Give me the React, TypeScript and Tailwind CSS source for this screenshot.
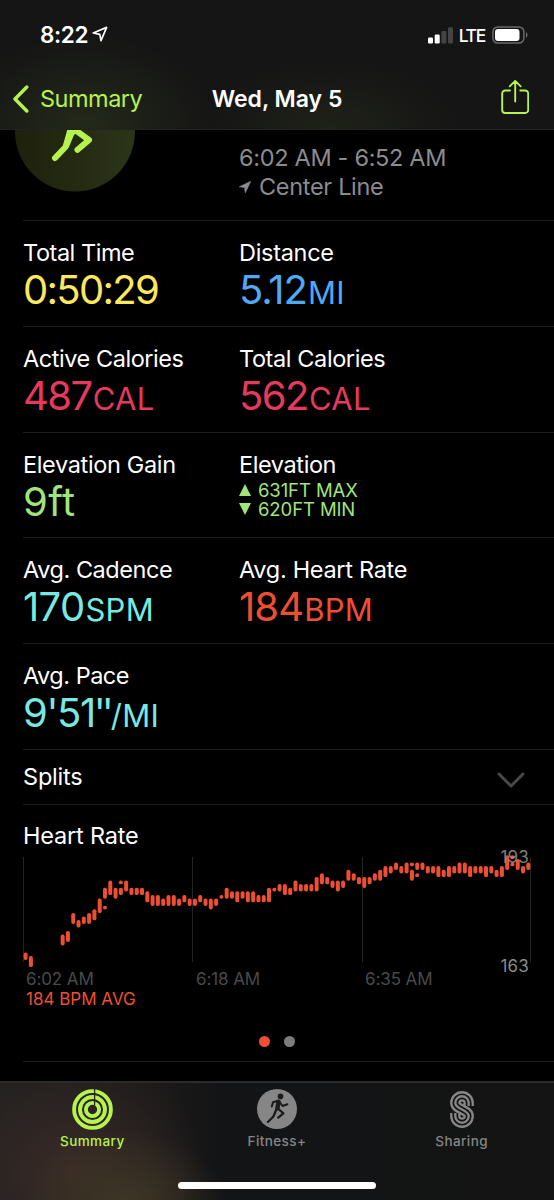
import React from 'react';

type Metric = {
  label: string;
  value?: string;
  marks?: string;
  unit?: string;
  color?: string;
  labelTracking: string;
  valueTracking?: string;
};

const rows: { height: string; cells: Metric[] }[] = [
  {
    height: 'h-[106px]',
    cells: [
      { label: 'Total Time', value: '0:50:29', color: 'text-[#fbe85c]', labelTracking: 'tracking-[-0.45px]', valueTracking: 'tracking-[-1.7px]' },
      { label: 'Distance', value: '5.12', unit: 'MI', color: 'text-[#4fa9f5]', labelTracking: 'tracking-[-0.3px]', valueTracking: 'tracking-[-1px]' }
    ]
  },
  {
    height: 'h-[106px]',
    cells: [
      { label: 'Active Calories', value: '487', unit: 'CAL', color: 'text-[#e5395d]', labelTracking: 'tracking-[-0.45px]', valueTracking: 'tracking-[-1.5px]' },
      { label: 'Total Calories', value: '562', unit: 'CAL', color: 'text-[#e5395d]', labelTracking: 'tracking-[-0.4px]', valueTracking: 'tracking-[-1.5px]' }
    ]
  },
  {
    height: 'h-[105px]',
    cells: [
      { label: 'Elevation Gain', value: '9ft', color: 'text-[#a1e47b]', labelTracking: 'tracking-[-0.35px]', valueTracking: 'tracking-[0.4px]' },
      { label: 'Elevation', labelTracking: 'tracking-[-0.4px]' }
    ]
  },
  {
    height: 'h-[106px]',
    cells: [
      { label: 'Avg. Cadence', value: '170', unit: 'SPM', color: 'text-[#79e8e0]', labelTracking: 'tracking-[-0.45px]', valueTracking: 'tracking-[-0.7px]' },
      { label: 'Avg. Heart Rate', value: '184', unit: 'BPM', color: 'text-[#ee4f33]', labelTracking: 'tracking-[-0.3px]', valueTracking: 'tracking-[-0.9px]' }
    ]
  },
  {
    height: 'h-[106px]',
    cells: [
      { label: 'Avg. Pace', value: "9'51", marks: "''", unit: '/MI', color: 'text-[#79e8e0]', labelTracking: 'tracking-[-0.5px]', valueTracking: 'tracking-[-1.4px]' }
    ]
  }
];

// [slot, highest bpm, lowest bpm]
const samples: [number, number, number][] = [
  [0, 166, 165], [1, 165, 163], [7, 171, 169], [8, 172, 170], [9, 177, 175],
  [10, 175, 174], [11, 176, 175], [12, 177, 175], [13, 178, 176], [14, 181, 178],
  [15, 184, 182], [15, 179, 179], [16, 186, 183], [17, 184, 182], [18, 184, 183],
  [18, 186, 186], [19, 186, 184], [20, 184, 183], [21, 184, 183], [22, 184, 183],
  [23, 183, 181], [24, 182, 180], [25, 182, 180], [26, 181, 180], [27, 182, 180],
  [28, 182, 180], [29, 181, 180], [30, 182, 181], [31, 181, 180], [32, 181, 180],
  [33, 182, 181], [34, 181, 180], [35, 181, 179], [36, 181, 180], [37, 182, 182],
  [38, 184, 182], [39, 183, 182], [40, 183, 181], [41, 183, 182], [42, 183, 181],
  [43, 183, 181], [44, 182, 181], [45, 182, 181], [46, 184, 181], [47, 184, 184],
  [48, 185, 184], [49, 185, 183], [50, 184, 183], [51, 186, 184], [52, 185, 184],
  [53, 185, 184], [54, 185, 184], [55, 187, 184], [56, 188, 186], [57, 187, 186],
  [58, 186, 185], [59, 186, 184], [60, 186, 185], [61, 189, 187], [62, 188, 187],
  [63, 187, 186], [64, 187, 185], [65, 187, 186], [66, 188, 187], [67, 189, 187],
  [68, 190, 188], [69, 190, 189], [70, 191, 190], [71, 190, 189], [72, 191, 189],
  [73, 189, 187], [73, 191, 191], [74, 191, 190], [74, 188, 188], [75, 191, 190],
  [76, 190, 189], [77, 190, 189], [78, 190, 188], [79, 189, 188], [80, 190, 188],
  [81, 190, 189], [82, 191, 189], [83, 191, 189], [84, 190, 188], [85, 190, 189],
  [86, 190, 189], [87, 190, 188], [88, 190, 189], [89, 189, 188], [90, 190, 188],
  [91, 193, 190], [92, 193, 193], [92, 191, 191], [93, 192, 190], [94, 190, 189],
  [95, 191, 190]
];

const Runner: React.FC = () => (
  <svg className="h-10 w-10" viewBox="0 0 40 40" fill="none">
    <circle cx="20" cy="20" r="20" fill="#868686" />
    <g stroke="#1b1b1b" strokeLinecap="round" strokeLinejoin="round">
      <circle cx="23.5" cy="7.4" r="2.8" fill="#1b1b1b" stroke="none" />
      <path d="M21 11.8 16 13.3 14.8 17.6M23 13.5l2.6 3.5 4.8-1.8" strokeWidth="2" />
      <path d="M21.6 12.8 20.4 19.2" strokeWidth="4.4" />
      <path d="M20.8 19.5 26.4 24.3 21.2 28.6M19.4 20.3 16.4 27.5 10.9 33" strokeWidth="2.3" />
    </g>
  </svg>
);

const Rings: React.FC = () => (
  <svg className="h-[41px] w-[41px]" viewBox="0 0 41 41" fill="none">
    <g stroke="#b6f34f" strokeWidth="3.9">
      <circle cx="20.5" cy="20.5" r="18.4" />
      <circle cx="20.5" cy="20.5" r="12.5" />
      <circle cx="20.5" cy="20.5" r="6.6" />
    </g>
    <path d="M22.6 0V16.5" stroke="#272120" strokeWidth="1.3" />
  </svg>
);

const SharingIcon: React.FC = () => {
  const s = 'M18.7 14.6V11.7A6.7 6.7 0 0 0 5.3 11.7C5.3 18.2 18.7 18.2 18.7 24.7A6.7 6.7 0 0 1 5.3 24.7V21.8';
  return (
    <svg className="h-[37px] w-6" viewBox="0 0 24 36.4" fill="none">
      <path d={s} stroke="#868686" strokeWidth="10.4" />
      <path d={s} stroke="#141414" strokeWidth="5.8" />
      <path d={s} stroke="#868686" strokeWidth="2.4" />
    </svg>
  );
};

const HeartRateChart: React.FC = () => (
  <svg className="block h-[120px] w-[554px]" viewBox="0 850 554 120" fill="none">
    {[23.5, 192.5, 362.5, 530.5].map((x) => (
      <path key={x} d={`M${x} 857V962`} stroke="#242425" />
    ))}
    {samples.map(([slot, high, low], index) => (
      <rect
        key={index}
        x={23.6 + slot * 5.292}
        y={855.3 + (193 - high) * 3.6}
        width="4"
        height={(high - low + 1) * 3.6 + 0.2}
        rx="1.9"
        fill="#ee4f33"
      />
    ))}
  </svg>
);

const App: React.FC = () => {
  return (
    <div className="flex h-[1200px] w-[554px] flex-col overflow-hidden bg-black font-['Inter',sans-serif] whitespace-nowrap text-white">
      {/* Status bar and navigation */}
      <header className="h-[130px] shrink-0 border-b border-[#222] bg-[#151515] bg-[radial-gradient(ellipse_130px_90px_at_85px_125px,#23291a,transparent),radial-gradient(ellipse_130px_70px_at_330px_130px,#1f2218,transparent)]">
        <div className="flex h-[70px] items-center pr-[26px] pl-10">
          <span className="text-[22.5px] leading-none font-semibold tracking-[-0.4px]">8:22</span>
          <svg className="mb-0.5 ml-1 h-4 w-4" viewBox="0 0 16 16" fill="none" stroke="#fff" strokeWidth="1.7" strokeLinejoin="round">
            <path d="M1.2 7 14.6 1.4 9 14.6 7.8 8.3Z" />
          </svg>
          <div className="ml-auto flex items-center">
            <svg className="h-[17px] w-[25px]" viewBox="0 0 25 17">
              <rect x="0" y="10.5" width="5" height="6" rx="1.2" fill="#fff" />
              <rect x="6.7" y="7.5" width="5" height="9" rx="1.2" fill="#fff" />
              <rect x="13.4" y="4" width="5" height="12.5" rx="1.2" fill="#444" />
              <rect x="20" y="0.3" width="5" height="16.2" rx="1.2" fill="#444" />
            </svg>
            <span className="mt-0.5 ml-1.5 text-[17.5px] leading-none font-medium tracking-[-1.3px]">LTE</span>
            <svg className="ml-[7px] h-[18px] w-9" viewBox="0 0 36 18" fill="none">
              <rect x="0.9" y="0.9" width="31" height="16.2" rx="5" stroke="#6a6a6a" strokeWidth="1.5" />
              <rect x="3" y="3" width="24.5" height="12" rx="3" fill="#fff" />
              <path d="M34 6.3c2 .8 2 4.6 0 5.4Z" fill="#6a6a6a" />
            </svg>
          </div>
        </div>
        <div className="grid h-[58px] grid-cols-[200px_1fr_200px] items-center">
          <div className="flex items-center pl-[13px] text-[#b6f34f]">
            <svg className="h-7 w-4" viewBox="0 0 16 28" fill="none" stroke="currentColor" strokeWidth="3.4" strokeLinecap="round" strokeLinejoin="round">
              <path d="M13.8 2 2 14l11.8 12" />
            </svg>
            <span className="ml-[11px] text-[23.5px] leading-none tracking-[-0.5px]">Summary</span>
          </div>
          <span className="text-center text-[23px] leading-none font-semibold">Wed, May 5</span>
          <svg className="mr-[25px] mb-1 h-9 w-7 justify-self-end" viewBox="0 0 28 36" fill="none" stroke="#b6f34f" strokeWidth="1.9" strokeLinecap="round" strokeLinejoin="round">
            <path d="M9 11.5H4.2a3 3 0 0 0-3 3V31a3 3 0 0 0 3 3h20a3 3 0 0 0 3-3V14.5a3 3 0 0 0-3-3H19.3M14.2 22.5V2M8.7 7.3l5.5-5.5 5.5 5.5" />
          </svg>
        </div>
      </header>

      {/* Workout heading, scrolled under the navigation */}
      <section className="flex h-[90px] shrink-0">
        <svg className="h-[90px] w-[239px]" viewBox="0 130 239 90" fill="none">
          <defs>
            <linearGradient id="disc" x1="0" x2="1">
              <stop offset="0" stopColor="#1e210c" />
              <stop offset="1" stopColor="#2b3419" />
            </linearGradient>
          </defs>
          <circle cx="75" cy="131.5" r="60" fill="url(#disc)" />
          <g stroke="#b6f34f" strokeWidth="6" strokeLinecap="round" strokeLinejoin="round">
            <path d="M71.5 126 65.5 147 55 158" />
            <path d="M76 130.5 89 140 77.5 149.8" />
          </g>
          <path d="M68 128H81L74 135 68.5 148 66 140Z" fill="#b6f34f" />
        </svg>
        <div className="pt-[13px] text-[23.5px] leading-[29px] tracking-[-0.32px] text-[#8b8b90]">
          <div>6:02 AM - 6:52 AM</div>
          <div className="flex items-center">
            <svg className="mr-2 h-3 w-3" viewBox="0 0 12 12" fill="#8b8b90">
              <path d="M.3 5.8 11.8.3 6.3 11.8 5.6 6.6Z" stroke="#8b8b90" strokeWidth="0.6" />
            </svg>
            Center Line
          </div>
        </div>
      </section>

      {rows.map((row, index) => (
        <section key={index} className={`${row.height} flex shrink-0 pl-[23px]`}>
          <div className="grid flex-1 grid-cols-[216px_1fr] border-t border-[#1d1d1e] pt-[18px]">
            {row.cells.map((cell) => (
              <div key={cell.label}>
                <div className={`text-[23.5px] leading-[28px] ${cell.labelTracking}`}>{cell.label}</div>
                {cell.value ? (
                  <div className={`text-[40px] leading-[46px] font-normal ${cell.color} ${cell.valueTracking}`}>
                    {cell.value}
                    {cell.marks && <span className="-ml-px tracking-[-4px]">{cell.marks}</span>}
                    {cell.unit && <span className="ml-px text-[31px] tracking-[0.3px]">{cell.unit}</span>}
                  </div>
                ) : (
                  <div className="pt-0.5 text-[18.5px] leading-[18.5px] tracking-[-0.1px] text-[#a1e47b]">
                    <div className="flex items-center gap-[7px]">
                      <svg className="h-3 w-3" viewBox="0 0 12 12" fill="currentColor"><path d="M6 0 12 12H0Z" /></svg>
                      631FT MAX
                    </div>
                    <div className="flex items-center gap-[7px]">
                      <svg className="h-3 w-3" viewBox="0 0 12 12" fill="currentColor"><path d="M6 12 12 0H0Z" /></svg>
                      620FT MIN
                    </div>
                  </div>
                )}
              </div>
            ))}
          </div>
        </section>
      ))}

      <section className="flex h-[55px] shrink-0 pl-[23px]">
        <div className="flex flex-1 items-center justify-between border-t border-[#1d1d1e] pr-[29px]">
          <span className="text-[23.5px] leading-none tracking-[-0.2px]">Splits</span>
          <svg className="mt-1.5 h-4 w-7" viewBox="0 0 28 16" fill="none" stroke="#48484b" strokeWidth="3" strokeLinecap="round" strokeLinejoin="round">
            <path d="M2 2l12 12L26 2" />
          </svg>
        </div>
      </section>

      {/* Heart rate */}
      <section className="flex h-[257px] shrink-0 flex-col">
        <div className="ml-[23px] h-[46px] border-t border-[#1d1d1e] pt-[17px] text-[23.5px] leading-[28px] tracking-[-0.2px]">Heart Rate</div>
        <div className="relative h-[119px]">
          <HeartRateChart />
          <span className="absolute top-[-2px] right-[25px] text-[17px] leading-[18px] tracking-[0.2px] text-[#a0a0a0]/80">193</span>
          <span className="absolute top-[107px] right-[25px] text-[17px] leading-[18px] tracking-[0.2px] text-[#8b8b8d]">163</span>
        </div>
        <div className="grid grid-cols-[170px_169px_1fr] pl-[26px] text-[17px] leading-[20px] tracking-[-0.1px] text-[#4a4a4c]">
          <span>6:02 AM</span>
          <span>6:18 AM</span>
          <span>6:35 AM</span>
        </div>
        <div className="pl-[26px] text-[17px] leading-[20px] text-[#ee4f33]">184 BPM AVG</div>
        <div className="mt-[27px] flex justify-center gap-[14px]">
          <span className="h-[11px] w-[11px] rounded-full bg-[#ee4f33]" />
          <span className="h-[11px] w-[11px] rounded-full bg-[#7d7d7d]" />
        </div>
      </section>
      <div className="ml-[23px] h-5 shrink-0 border-t border-[#1d1d1e]" />

      {/* Tab bar */}
      <footer className="flex flex-1 flex-col border-t-2 border-[#2b2b2b] bg-[#141414] bg-[radial-gradient(ellipse_100px_70px_at_125px_118px,#3d3625,transparent),radial-gradient(ellipse_130px_120px_at_75px_90px,#3a2b26,transparent),linear-gradient(90deg,#232121,#1b1919_30%,#131416_40%,#141414)]">
        <div className="grid grid-cols-3 pt-[5px] text-[13.5px] leading-[16px] font-medium tracking-[0.4px] text-[#868686]">
          <div className="flex flex-col items-center text-[#b6f34f]">
            <div className="flex h-[42px] items-center"><Rings /></div>
            <span className="mt-[3px]">Summary</span>
          </div>
          <div className="flex flex-col items-center">
            <div className="flex h-[42px] items-center"><Runner /></div>
            <span className="mt-[3px]">Fitness+</span>
          </div>
          <div className="flex flex-col items-center">
            <div className="flex h-[42px] items-center"><SharingIcon /></div>
            <span className="mt-[3px]">Sharing</span>
          </div>
        </div>
        <div className="mx-auto mt-auto mb-[11px] h-[7px] w-[198px] rounded-full bg-white" />
      </footer>
    </div>
  );
};

export default App;
